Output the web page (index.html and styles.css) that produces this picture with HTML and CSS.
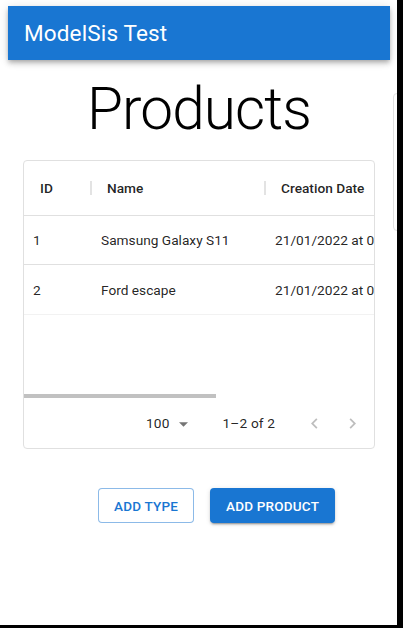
FILE: index.html
```html
<!DOCTYPE html>
<html lang="en">
<head>
<meta charset="utf-8">
<title>ModelSis Test</title>
<link rel="stylesheet" href="styles.css">
</head>
<body>
<div class="screen">
  <header class="appbar"><span class="brand">ModelSis Test</span></header>
  <div class="peek"></div>
  <main class="main">
    <h1 class="title">Products</h1>
    <section class="card">
      <div class="grid">
        <div class="row head">
          <div class="cell c-id"><span class="label">ID</span><span class="sep"></span></div>
          <div class="cell c-name"><span class="label">Name</span><span class="sep"></span></div>
          <div class="cell c-date"><span class="label">Creation Date</span></div>
        </div>
        <div class="row body">
          <div class="cell c-id">1</div>
          <div class="cell c-name">Samsung Galaxy S11</div>
          <div class="cell c-date">21/01/2022 at 09:42</div>
        </div>
        <div class="row body last">
          <div class="cell c-id">2</div>
          <div class="cell c-name">Ford escape</div>
          <div class="cell c-date">21/01/2022 at 09:45</div>
        </div>
        <div class="filler"></div>
        <div class="hscroll"><div class="thumb"></div></div>
      </div>
      <div class="footer">
        <span class="select">100<svg class="drop" viewBox="7 10 10 5" width="9" height="5"><path d="M7 10l5 5 5-5z" fill="rgba(0,0,0,0.54)"/></svg></span>
        <span class="rows">1–2 of 2</span>
        <span class="actions">
          <span class="iconbtn"><svg viewBox="0 0 24 24" width="21" height="21"><path d="M15.41 16.59L10.83 12l4.58-4.59L14 6l-6 6 6 6 1.41-1.41z" fill="rgba(0,0,0,0.26)"/></svg></span>
          <span class="iconbtn"><svg viewBox="0 0 24 24" width="21" height="21"><path d="M8.59 16.59L13.17 12 8.59 7.41 10 6l6 6-6 6-1.41-1.41z" fill="rgba(0,0,0,0.26)"/></svg></span>
        </span>
      </div>
    </section>
    <div class="buttons">
      <button class="btn outlined">Add Type</button>
      <button class="btn contained">Add Product</button>
    </div>
  </main>
</div>
</body>
</html>
```
FILE: styles.css
```css
html {
  background: #000;
}
body {
  margin: 0;
  font-family: Roboto, "Liberation Sans", sans-serif;
  color: rgba(0, 0, 0, 0.87);
}
.screen {
  position: relative;
  width: 397px;
  height: 625px;
  background: #fff;
  overflow: hidden;
  display: flex;
  flex-direction: column;
}
.appbar {
  margin: 6px 7px 0 8px;
  height: 54px;
  background: #1976d2;
  color: #fff;
  display: flex;
  align-items: center;
  padding: 0 16px;
  box-shadow: 0 2px 4px -1px rgba(0,0,0,0.2), 0 4px 5px 0 rgba(0,0,0,0.14), 0 1px 10px 0 rgba(0,0,0,0.12);
  position: relative;
  z-index: 1;
}
.brand {
  font-size: 22.5px;
  font-weight: 400;
  letter-spacing: 0.15px;
  margin-top: -1px;
}
.peek {
  position: absolute;
  left: 393px;
  top: 93px;
  width: 30px;
  height: 136px;
  border: 1px solid #e0e0e0;
  border-radius: 4px;
}
.main {
  display: flex;
  flex-direction: column;
}
.title {
  margin: 13px 0 15px 0;
  font-size: 58.5px;
  font-weight: 300;
  line-height: 72px;
  letter-spacing: -0.9px;
  text-align: center;
  padding-left: 1px;
  color: #000;
}
.card {
  margin-left: 23px;
  width: 350px;
  border: 1px solid #e0e0e0;
  border-radius: 4px;
  display: flex;
  flex-direction: column;
}
.grid {
  overflow: hidden;
  display: flex;
  flex-direction: column;
}
.row {
  display: flex;
  width: 400px;
  font-size: 13.7px;
}
.head {
  height: 54px;
  border-bottom: 1px solid #e0e0e0;
  font-weight: 500;
}
.body {
  height: 48px;
  border-bottom: 1px solid #e0e0e0;
}
.body.last {
  height: 49px;
  border-bottom-color: #f2f2f2;
}
.cell {
  display: flex;
  align-items: center;
  flex: none;
  white-space: nowrap;
  padding-left: 9px;
  box-sizing: border-box;
}
.head .cell {
  padding-left: 16px;
  justify-content: space-between;
}
.head .c-name,
.head .c-date {
  padding-left: 15px;
}
.c-id { width: 68px; }
.c-name { width: 174px; }
.c-date { width: 158px; }
.sep {
  width: 2px;
  height: 14px;
  background: #e3e3e3;
}
.filler {
  height: 79px;
}
.hscroll {
  height: 4px;
}
.thumb {
  width: 192px;
  height: 4px;
  background: #c1c1c1;
}
.footer {
  height: 50px;
  display: flex;
  align-items: center;
  padding-left: 122px;
  font-size: 13.7px;
  letter-spacing: 0.15px;
  white-space: nowrap;
}
.select {
  display: inline-flex;
  align-items: center;
  flex: none;
}
.drop {
  margin-left: 9px;
  margin-top: 2px;
}
.rows {
  flex: none;
  margin-left: 35px;
}
.actions {
  display: flex;
  flex: none;
  margin-left: 20px;
}
.iconbtn {
  width: 38px;
  height: 40px;
  display: flex;
  align-items: center;
  justify-content: center;
}
.buttons {
  display: flex;
  gap: 16px;
  margin: 39px 0 0 98px;
}
.btn {
  font-family: Roboto, "Liberation Sans", sans-serif;
  font-size: 13.5px;
  font-weight: 500;
  letter-spacing: 0.2px;
  text-transform: uppercase;
  height: 35px;
  padding: 0 15px;
  border-radius: 4px;
  cursor: pointer;
}
.outlined {
  background: #fff;
  color: #1976d2;
  border: 1px solid rgba(25, 118, 210, 0.5);
}
.contained {
  background: #1976d2;
  color: #fff;
  border: none;
  padding: 0 16px;
  box-shadow: 0 3px 1px -2px rgba(0,0,0,0.2), 0 2px 2px 0 rgba(0,0,0,0.14), 0 1px 5px 0 rgba(0,0,0,0.12);
}
```
